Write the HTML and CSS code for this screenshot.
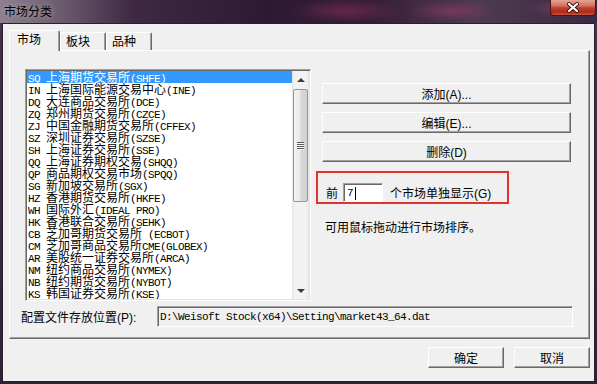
FILE: index.html
```html
<!DOCTYPE html>
<html lang="zh-CN">
<head>
  <meta charset="UTF-8">
  <meta name="viewport" content="width=device-width, initial-scale=1.0">
  <title>市场分类</title>
  <link rel="stylesheet" href="styles.css">
</head>
<body>
  <div class="window">
    <div class="titlebar">
      <span class="title">市场分类</span>
      <div class="close-btn">
        <svg width="46" height="16" viewBox="0 0 46 16">
          <path d="M19 4 L27 11 M27 4 L19 11" stroke="#3a0d08" stroke-width="4" stroke-linecap="round"/>
          <path d="M19 4 L27 11 M27 4 L19 11" stroke="#ffffff" stroke-width="2.2" stroke-linecap="round"/>
        </svg>
      </div>
    </div>

    <div class="client">
      <div class="tabs">
        <div class="tab active">市场</div>
        <div class="tab">板块</div>
        <div class="tab">品种</div>
      </div>

      <div class="panel">
        <div class="top-row">
          <div class="listbox">
            <ul class="market-list">
              <li class="sel">SQ <span class="cn">上海期货交易所</span>(SHFE)</li>
              <li>IN <span class="cn">上海国际能源交易中心</span>(INE)</li>
              <li>DQ <span class="cn">大连商品交易所</span>(DCE)</li>
              <li>ZQ <span class="cn">郑州期货交易所</span>(CZCE)</li>
              <li>ZJ <span class="cn">中国金融期货交易所</span>(CFFEX)</li>
              <li>SZ <span class="cn">深圳证券交易所</span>(SZSE)</li>
              <li>SH <span class="cn">上海证券交易所</span>(SSE)</li>
              <li>QQ <span class="cn">上海证券期权交易</span>(SHQQ)</li>
              <li>QP <span class="cn">商品期权交易市场</span>(SPQQ)</li>
              <li>SG <span class="cn">新加坡交易所</span>(SGX)</li>
              <li>HZ <span class="cn">香港期货交易所</span>(HKFE)</li>
              <li>WH <span class="cn">国际外汇</span>(IDEAL PRO)</li>
              <li>HK <span class="cn">香港联合交易所</span>(SEHK)</li>
              <li>CB <span class="cn">芝加哥期货交易所</span> (ECBOT)</li>
              <li>CM <span class="cn">芝加哥商品交易所</span>CME(GLOBEX)</li>
              <li>AR <span class="cn">美股统一证券交易所</span>(ARCA)</li>
              <li>NM <span class="cn">纽约商品交易所</span>(NYMEX)</li>
              <li>NB <span class="cn">纽约期货交易所</span>(NYBOT)</li>
              <li>KS <span class="cn">韩国证券交易所</span>(KSE)</li>
            </ul>
            <div class="scrollbar">
              <div class="sb-arrow up"></div>
              <div class="sb-thumb"><span class="grip"></span></div>
              <div class="sb-track"></div>
              <div class="sb-arrow down"></div>
            </div>
          </div>

          <div class="side">
            <button class="btn wide">添加(A)...</button>
            <button class="btn wide">编辑(E)...</button>
            <button class="btn wide">删除(D)</button>

            <div class="show-row">
              <span>前</span>
              <div class="num">7<span class="caret"></span></div>
              <span>个市场单独显示(G)</span>
            </div>

            <p class="hint">可用鼠标拖动进行市场排序。</p>
          </div>
        </div>

        <div class="path-row">
          <label class="path-label">配置文件存放位置(P):</label>
          <div class="path-box">D:\Weisoft Stock(x64)\Setting\market43_64.dat</div>
        </div>
      </div>

      <div class="dialog-buttons">
        <button class="btn">确定</button>
        <button class="btn">取消</button>
      </div>
    </div>
  </div>
</body>
</html>
```

FILE: styles.css
```css
/* dialog: 市场分类 */
* {
  box-sizing: border-box;
}

body {
  margin: 0;
  width: 597px;
  height: 384px;
  overflow: hidden;
  background: #3a2b3f;
  font-family: "Liberation Sans", "Noto Sans CJK SC", sans-serif;
  font-size: 12px;
  color: #000000;
}

.window {
  height: 384px;
  display: flex;
  flex-direction: column;
  padding: 0 2px 2px;
  background: linear-gradient(180deg, #45344a, #2f2235);
}

/* glass title bar */
.titlebar {
  height: 23px;
  margin: 0 -2px;
  padding-left: 4px;
  display: flex;
  align-items: flex-start;
  background:
    radial-gradient(ellipse 55px 12px at 345px 11px, rgba(190, 60, 110, 0.35), transparent),
    radial-gradient(ellipse 45px 10px at 450px 11px, rgba(200, 70, 120, 0.35), transparent),
    radial-gradient(ellipse 30px 9px at 560px 8px, rgba(200, 90, 130, 0.3), transparent),
    linear-gradient(90deg, #8d8090 0%, #6d5c70 10%, #3f2944 22%, #2c1a34 45%, #361d37 62%, #4f3a50 80%, #3a2943 100%);
}

.title {
  padding-top: 3px;
  line-height: 16px;
  font-family: "Noto Sans CJK SC", sans-serif;
  text-shadow: 0 0 6px rgba(255, 255, 255, 0.5);
}

.close-btn {
  margin-left: auto;
  margin-right: 1px;
  width: 46px;
  height: 16px;
  border: 1px solid #4a1410;
  border-top: none;
  border-radius: 0 0 4px 4px;
  background: linear-gradient(180deg, #e5a493 0%, #d3705e 40%, #c2402f 52%, #ad2a1d 80%, #c9563a 100%);
  display: flex;
  justify-content: center;
}

.close-btn svg {
  flex: none;
}

/* client area */
.client {
  flex: 1;
  display: flex;
  flex-direction: column;
  padding: 6px 4px 0 6px;
  background: #f0f0f0;
  border: 1px solid #2a1f2e;
}

.tabs {
  display: flex;
  align-items: flex-end;
  height: 20px;
}

.tab {
  width: 46px;
  height: 18px;
  padding: 2px 0 0 5px;
  line-height: 14px;
  background: #f0f0f0;
  border: 1px solid;
  border-color: #ffffff #696969 transparent #ffffff;
  border-bottom: none;
  border-radius: 2px 2px 0 0;
  box-shadow: inset -1px 0 #a0a0a0;
}

.tab.active {
  width: 51px;
  height: 21px;
  padding: 2px 0 0 7px;
  margin-bottom: -1px;
  position: relative;
  z-index: 1;
}

.panel {
  height: 289px;
  padding: 18px 0 0 15px;
  border: 1px solid;
  border-color: #ffffff #696969 #696969 #ffffff;
  box-shadow: inset -1px -1px #a0a0a0;
}

.top-row {
  display: flex;
  align-items: flex-start;
}

/* market list */
.listbox {
  width: 286px;
  height: 232px;
  display: flex;
  padding: 1px;
  background: #ffffff;
  border: 1px solid;
  border-color: #a0a0a0 #ffffff #ffffff #a0a0a0;
  box-shadow: inset 1px 1px #696969, inset -1px -1px #e3e3e3;
}

.market-list {
  flex: 1;
  list-style: none;
  margin: 0;
  padding: 0;
  overflow: hidden;
}

.market-list li {
  height: 12px;
  line-height: 12px;
  padding-left: 1px;
  white-space: nowrap;
  font-family: "Liberation Mono", monospace;
  font-size: 11px;
  letter-spacing: -0.6px;
}

.market-list .cn {
  display: inline-block;
  height: 12px;
  line-height: 12px;
  font-family: "Noto Sans CJK SC", sans-serif;
  font-size: 12px;
  letter-spacing: 0;
}

.market-list li.sel {
  background: #3399ff;
  color: #ffffff;
}

.scrollbar {
  width: 17px;
  display: flex;
  flex-direction: column;
  background: linear-gradient(90deg, #e6e6e6, #f2f2f2 3px, #f2f2f2 14px, #e6e6e6);
}

.sb-arrow {
  height: 17px;
  display: flex;
  align-items: center;
  justify-content: center;
}

.sb-arrow::before {
  content: "";
  border-left: 4px solid transparent;
  border-right: 4px solid transparent;
}

.sb-arrow.up::before {
  border-bottom: 4px solid #3c3c3c;
}

.sb-arrow.down::before {
  border-top: 4px solid #3c3c3c;
}

.sb-thumb {
  height: 113px;
  margin: 1px 1px 0;
  border: 1px solid #979797;
  border-radius: 2px;
  background: linear-gradient(90deg, #f4f4f4, #e8e8e8 45%, #d8d8d8 55%, #d0d0d0);
  display: flex;
  align-items: center;
  justify-content: center;
}

.grip {
  width: 7px;
  height: 8px;
  background: repeating-linear-gradient(180deg, #5a5a5a 0 1px, #fafafa 1px 2px);
}

.sb-track {
  flex: 1;
}

/* right column */
.side {
  width: 249px;
  margin-left: 11px;
  padding-top: 14px;
}

.btn {
  display: block;
  height: 21px;
  padding: 0;
  font: inherit;
  color: #000000;
  text-align: center;
  background: #f0f0f0;
  border: 1px solid;
  border-color: #ffffff #696969 #696969 #ffffff;
  box-shadow: inset -1px -1px #a0a0a0;
}

.btn.wide {
  width: 249px;
}

.btn.wide + .btn.wide {
  margin-top: 8px;
}

.show-row {
  display: flex;
  align-items: center;
  width: 193px;
  margin: 9px 0 0 -6px;
  padding: 10px 0 0 8px;
  border: 2px solid #e3332e;
}

.num {
  width: 40px;
  height: 19px;
  margin: 0 7px 0 5px;
  padding: 1px 0 0 3px;
  display: flex;
  align-items: center;
  background: #ffffff;
  font-family: "Liberation Mono", monospace;
  font-size: 11px;
  border: 1px solid;
  border-color: #a0a0a0 #ffffff #ffffff #a0a0a0;
  box-shadow: inset 1px 1px #696969;
}

.caret {
  width: 1px;
  height: 13px;
  margin-left: 1px;
  background: #000000;
}

.hint {
  margin: 17px 0 0 3px;
  line-height: 14px;
}

/* config path */
.path-row {
  display: flex;
  align-items: center;
  margin: 5px 0 0 -4px;
}

.path-label {
  width: 136px;
}

.path-box {
  width: 416px;
  height: 21px;
  padding-left: 2px;
  display: flex;
  align-items: center;
  font-family: "Liberation Mono", monospace;
  font-size: 11px;
  letter-spacing: -0.6px;
  background: #f0f0f0;
  border: 1px solid;
  border-color: #a0a0a0 #ffffff #ffffff #a0a0a0;
  box-shadow: inset 1px 1px #696969;
  white-space: pre;
}

.dialog-buttons {
  display: flex;
  justify-content: flex-end;
  gap: 10px;
  margin-top: 8px;
}

.dialog-buttons .btn {
  width: 76px;
}
```
